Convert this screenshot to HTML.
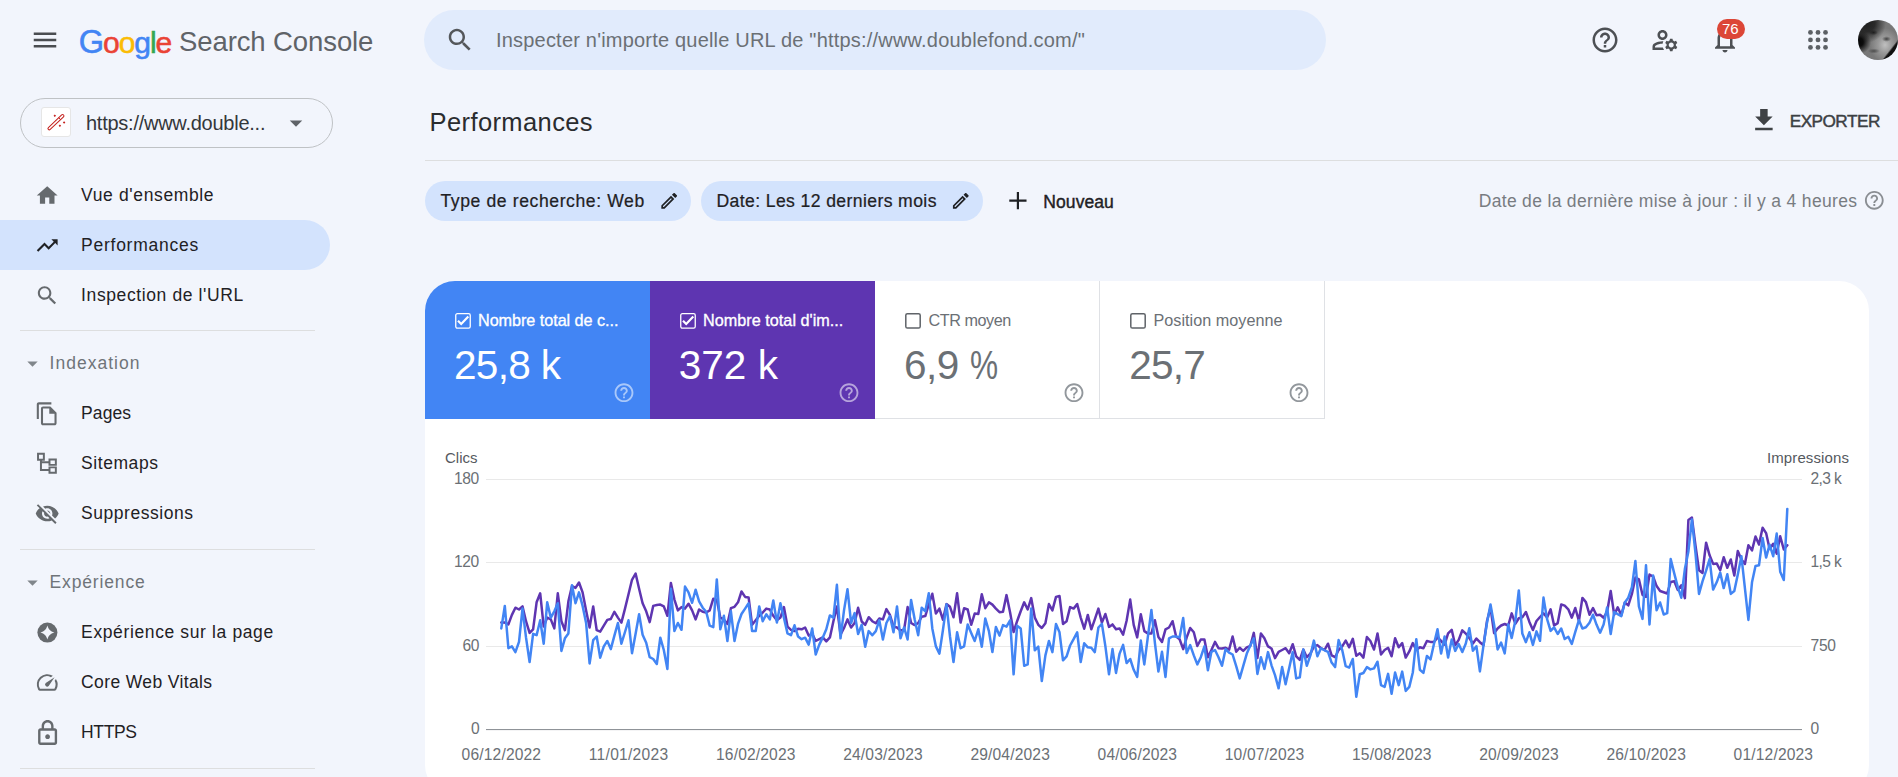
<!DOCTYPE html>
<html lang="fr"><head><meta charset="utf-8"><title>Performances - Google Search Console</title>
<style>
html,body{margin:0;padding:0;background:#f2f5fc}
body{width:1898px;height:777px;overflow:hidden;position:relative;font-family:"Liberation Sans", sans-serif;}
header,nav,main{display:block;margin:0;padding:0}
.t{position:absolute;white-space:nowrap;margin:0;padding:0}
.i{position:absolute;display:block;overflow:visible}
.b{position:absolute;box-sizing:border-box}
</style></head><body>
<header>
<div class="b" style="left:424px;top:10px;width:901.5px;height:60px;border-radius:30px;background:#e1ebfc"></div>
<div class="b" style="left:1858px;top:20px;width:40px;height:40px;border-radius:20px;background:radial-gradient(ellipse 4.5px 2.6px at 15.5px 12.5px,rgba(25,25,25,.85) 0,rgba(25,25,25,0) 100%),radial-gradient(ellipse 4.5px 2.8px at 28.5px 19px,rgba(30,30,30,.75) 0,rgba(30,30,30,0) 100%),radial-gradient(ellipse 6px 2.5px at 16px 31px,rgba(40,40,40,.6) 0,rgba(40,40,40,0) 100%),linear-gradient(128deg,rgba(0,0,0,0) 0,rgba(0,0,0,0) 77%,#111 80%,#0a0a0a 100%),radial-gradient(circle 12px at 1px 22px,#060606 0,#0c0c0c 35%,rgba(12,12,12,0) 100%),radial-gradient(circle 20px at 8px 3px,#1e1e1e 0,#2a2a2a 45%,rgba(42,42,42,0) 100%),radial-gradient(ellipse 15px 17px at 27px 25px,#c0c0c0 0,#9a9a9a 45%,#787878 100%)"></div>
<svg class="i" style="left:30px;top:25px;" width="31" height="31" viewBox="0 0 31 31"><g transform="translate(0.00 0.00) scale(1.2500)"><path fill="#4a4d51" d="M3 18h18v-2H3v2zm0-5h18v-2H3v2zm0-7v2h18V6H3z"/></g></svg>
<svg class="i" style="left:445px;top:25px;" width="31" height="31" viewBox="0 0 31 31"><g transform="translate(0.00 0.00) scale(1.2500)"><path fill="#54575b" d="M15.5 14h-.79l-.28-.27C15.41 12.59 16 11.11 16 9.5 16 5.91 13.09 3 9.5 3S3 5.91 3 9.5 5.91 16 9.5 16c1.61 0 3.09-.59 4.23-1.57l.27.28v.79l5 4.99L20.49 19l-4.99-5zm-6 0C7.01 14 5 11.99 5 9.5S7.01 5 9.5 5 14 7.01 14 9.5 11.99 14 9.5 14z"/></g></svg>
<svg class="i" style="left:1590px;top:25px;" width="31" height="31" viewBox="0 0 31 31"><g transform="translate(0.00 0.00) scale(1.2500)"><path fill="#4d5054" d="M11 18h2v-2h-2v2zm1-16C6.48 2 2 6.48 2 12s4.48 10 10 10 10-4.48 10-10S17.52 2 12 2zm0 18c-4.41 0-8-3.59-8-8s3.59-8 8-8 8 3.59 8 8-3.59 8-8 8zm0-14c-2.21 0-4 1.79-4 4h2c0-1.1.9-2 2-2s2 .9 2 2c0 2-3 1.75-3 5h2c0-2.25 3-2.5 3-5 0-2.21-1.79-4-4-4z"/></g></svg>
<svg class="i" style="left:1650px;top:25px;" width="31" height="31" viewBox="0 0 31 31"><g transform="translate(0.00 0.00) scale(1.2500)"><path fill="#4d5054" d="M4 18v-.65c0-.34.16-.66.41-.81C6.1 15.53 8.03 15 10 15c.03 0 .05 0 .08.01.1-.7.3-1.37.59-1.98-.22-.02-.44-.03-.67-.03-2.42 0-4.68.67-6.61 1.82-.88.52-1.39 1.5-1.39 2.53V20h9.26c-.42-.6-.75-1.28-.97-2H4zM10 12c2.21 0 4-1.79 4-4s-1.79-4-4-4-4 1.79-4 4 1.79 4 4 4zm0-6c1.1 0 2 .9 2 2s-.9 2-2 2-2-.9-2-2 .9-2 2-2zM20.75 16c0-.22-.03-.42-.06-.63l1.14-1.01-1-1.73-1.45.49c-.32-.27-.68-.48-1.08-.63L18 11h-2l-.3 1.49c-.4.15-.76.36-1.08.63l-1.45-.49-1 1.73 1.14 1.01c-.03.21-.06.41-.06.63s.03.42.06.63l-1.14 1.01 1 1.73 1.45-.49c.32.27.68.48 1.08.63L16 21h2l.3-1.49c.4-.15.76-.36 1.08-.63l1.45.49 1-1.73-1.14-1.01c.03-.21.06-.41.06-.63zM17 18c-1.1 0-2-.9-2-2s.9-2 2-2 2 .9 2 2-.9 2-2 2z"/></g></svg>
<svg class="i" style="left:1710px;top:25px;" width="31" height="31" viewBox="0 0 31 31"><g transform="translate(0.00 0.00) scale(1.2500)"><path fill="#4d5054" d="M12 22c1.1 0 2-.9 2-2h-4c0 1.1.9 2 2 2zm6-6v-5c0-3.07-1.63-5.64-4.5-6.32V4c0-.83-.67-1.5-1.5-1.5s-1.5.67-1.5 1.5v.68C7.64 5.36 6 7.92 6 11v5l-2 2v1h16v-1l-2-2zm-2 1H8v-6c0-2.48 1.51-4.5 4-4.5s4 2.02 4 4.5v6z"/></g></svg>
<svg class="i" style="left:1805px;top:27px" width="26" height="26" viewBox="0 0 26 26"><circle cx="5.46" cy="5.39" r="2.4" fill="#5c6065"/><circle cx="5.46" cy="12.92" r="2.4" fill="#5c6065"/><circle cx="5.46" cy="20.45" r="2.4" fill="#5c6065"/><circle cx="12.99" cy="5.39" r="2.4" fill="#5c6065"/><circle cx="12.99" cy="12.92" r="2.4" fill="#5c6065"/><circle cx="12.99" cy="20.45" r="2.4" fill="#5c6065"/><circle cx="20.52" cy="5.39" r="2.4" fill="#5c6065"/><circle cx="20.52" cy="12.92" r="2.4" fill="#5c6065"/><circle cx="20.52" cy="20.45" r="2.4" fill="#5c6065"/></svg>
<div class="b" style="left:1716.5px;top:19px;width:28px;height:19.6px;border-radius:10px;background:#dc4637"></div>
<div id="t0" class="t" style="left:78.8px;top:22.50px;font-size:30px;line-height:39.0px;color:#4285f4;letter-spacing:-1.051px;-webkit-text-stroke:0.55px;"><span style="color:#4285f4;font-size:32.5px">G</span><span style="color:#ea4335">o</span><span style="color:#fbbc05">o</span><span style="color:#4285f4">g</span><span style="color:#34a853">l</span><span style="color:#ea4335">e</span></div>
<div id="t1" class="t" style="left:179px;top:24.40px;font-size:27.5px;line-height:35.75px;color:#5f6368;letter-spacing:-0.098px;">Search Console</div>
<div id="t2" class="t" style="left:496px;top:26.57px;font-size:20px;line-height:26.0px;color:#6b7075;letter-spacing:0.199px;">Inspecter n'importe quelle URL de "https://www.doublefond.com/"</div>
<div id="t3" class="t" style="left:1722px;top:19.35px;font-size:15px;line-height:19.5px;color:#ffffff;letter-spacing:-0.044px;">76</div>
</header>
<nav>
<div class="b" style="left:20px;top:98px;width:312.5px;height:49.5px;border-radius:25px;border:1px solid #bfc2c5"></div>
<div class="b" style="left:41px;top:107px;width:30px;height:30px;border-radius:3px;background:#fff;border:1px solid #e6e6e6"></div>
<div class="b" style="left:0;top:220.2px;width:330px;height:49.6px;border-radius:0 25px 25px 0;background:#d3e3fd"></div>
<div class="b" style="left:20px;top:329.8px;width:295px;height:1.3px;background:#dddedf"></div>
<div class="b" style="left:20px;top:548.8px;width:295px;height:1.3px;background:#dddedf"></div>
<div class="b" style="left:20px;top:767.6px;width:295px;height:1.3px;background:#dddedf"></div>
<svg class="i" style="left:281px;top:108px;" width="31" height="31" viewBox="0 0 31 31"><g transform="translate(0.00 0.00) scale(1.2500)"><path fill="#5f6368" d="M7 10l5 5 5-5z"/></g></svg>
<svg class="i" style="left:34px;top:183px;" width="26" height="26" viewBox="0 0 26 26"><g transform="translate(0.70 0.00) scale(1.0417)"><path fill="#666a6e" d="M10 20v-6h4v6h5v-8h3L12 3 2 12h3v8z"/></g></svg>
<svg class="i" style="left:34px;top:233px;" width="26" height="26" viewBox="0 0 26 26"><g transform="translate(0.70 0.00) scale(1.0417)"><path fill="#1f2124" d="M16 6l2.29 2.29-4.88 4.88-4-4L2 16.59 3.41 18l6-6 4 4 6.3-6.29L22 12V6z"/></g></svg>
<svg class="i" style="left:34px;top:283px;" width="26" height="26" viewBox="0 0 26 26"><g transform="translate(0.70 0.00) scale(1.0417)"><path fill="#666a6e" d="M15.5 14h-.79l-.28-.27C15.41 12.59 16 11.11 16 9.5 16 5.91 13.09 3 9.5 3S3 5.91 3 9.5 5.91 16 9.5 16c1.61 0 3.09-.59 4.23-1.57l.27.28v.79l5 4.99L20.49 19l-4.99-5zm-6 0C7.01 14 5 11.99 5 9.5S7.01 5 9.5 5 14 7.01 14 9.5 11.99 14 9.5 14z"/></g></svg>
<svg class="i" style="left:20px;top:351px;" width="26" height="26" viewBox="0 0 26 26"><g transform="translate(0.00 0.00) scale(1.0417)"><path fill="#80868b" d="M7 10l5 5 5-5z"/></g></svg>
<svg class="i" style="left:34px;top:401px;" width="26" height="26" viewBox="0 0 26 26"><g transform="translate(0.70 0.30) scale(1.0417)"><path fill="#666a6e" d="M16 1H4c-1.1 0-2 .9-2 2v14h2V3h12V1zm-1 4H8c-1.1 0-1.99.9-1.99 2L6 21c0 1.1.89 2 1.99 2H19c1.1 0 2-.9 2-2V11l-6-6zM8 21V7h6v5h5v9H8z"/></g></svg>
<svg class="i" style="left:34px;top:450px;" width="26" height="26" viewBox="0 0 26 26"><g transform="translate(0.70 0.50) scale(1.0417)"><path fill="none" stroke="#666a6e" stroke-width="1.9" d="M3.2 3.2h5.6v5.6H3.2zM14.2 8.7h6.1v5.1h-6.1zM14.2 16.2h6.1v5.1h-6.1zM6 8.8v10h8.2M6 11.2h8.2"/></g></svg>
<svg class="i" style="left:34px;top:501px;" width="26" height="26" viewBox="0 0 26 26"><g transform="translate(0.70 0.00) scale(1.0417)"><path fill="#666a6e" d="M12 7c2.76 0 5 2.24 5 5 0 .65-.13 1.26-.36 1.83l2.92 2.92c1.51-1.26 2.7-2.89 3.43-4.75-1.73-4.39-6-7.5-11-7.5-1.4 0-2.74.25-3.98.7l2.16 2.16C10.74 7.13 11.35 7 12 7zM2 4.27l2.28 2.28.46.46C3.08 8.3 1.78 10.02 1 12c1.73 4.39 6 7.5 11 7.5 1.55 0 3.03-.3 4.38-.84l.42.42L19.73 22 21 20.73 3.27 3 2 4.27zM7.53 9.8l1.55 1.55c-.05.21-.08.43-.08.65 0 1.66 1.34 3 3 3 .22 0 .44-.03.65-.08l1.55 1.55c-.67.33-1.41.53-2.2.53-2.76 0-5-2.24-5-5 0-.79.2-1.53.53-2.2zm4.31-.78l3.15 3.15.02-.16c0-1.66-1.34-3-3-3l-.17.01z"/></g></svg>
<svg class="i" style="left:20px;top:570px;" width="26" height="26" viewBox="0 0 26 26"><g transform="translate(0.00 0.00) scale(1.0417)"><path fill="#80868b" d="M7 10l5 5 5-5z"/></g></svg>
<svg class="i" style="left:34px;top:620px;" width="26" height="26" viewBox="0 0 26 26"><g transform="translate(0.90 0.10) scale(1.0417)"><circle cx="12" cy="12" r="9.6" fill="#666a6e"/><path fill="#f2f5fc" d="M12 5.3C13.3 9.3 14.7 10.7 18.7 12 14.7 13.3 13.3 14.7 12 18.7 10.7 14.7 9.3 13.3 5.3 12 9.3 10.7 10.7 9.3 12 5.3z"/></g></svg>
<svg class="i" style="left:34px;top:670px;" width="26" height="26" viewBox="0 0 26 26"><g transform="translate(0.70 0.00) scale(1.0417)"><path fill="#666a6e" d="M20.38 8.57l-1.23 1.85a8 8 0 0 1-.22 7.58H5.07A8 8 0 0 1 15.58 6.85l1.85-1.23A10 10 0 0 0 3.35 19a2 2 0 0 0 1.72 1h13.85a2 2 0 0 0 1.74-1 10 10 0 0 0-.27-10.44zm-9.79 6.84a2 2 0 0 0 2.83 0l5.66-8.49-8.49 5.66a2 2 0 0 0 0 2.83z"/></g></svg>
<svg class="i" style="left:33px;top:718px;" width="30" height="30" viewBox="0 0 30 30"><g transform="translate(0.35 0.85) scale(1.1875)"><path fill="#666a6e" d="M18 8h-1V6c0-2.76-2.24-5-5-5S7 3.24 7 6v2H6c-1.1 0-2 .9-2 2v10c0 1.1.9 2 2 2h12c1.1 0 2-.9 2-2V10c0-1.1-.9-2-2-2zM9 6c0-1.66 1.34-3 3-3s3 1.34 3 3v2H9V6zm9 14H6V10h12v10zm-6-3c1.1 0 2-.9 2-2s-.9-2-2-2-2 .9-2 2 .9 2 2 2z"/></g></svg>
<svg class="i" style="left:41px;top:107px" width="30" height="30" viewBox="0 0 30 30"><path d="M8.3 21.5L21.6 8.9" stroke="#c5221f" stroke-width="3.7" stroke-linecap="round" fill="none"/><path d="M8.3 21.5L21.6 8.9" stroke="#fff" stroke-width="1.6" stroke-linecap="round" fill="none"/><path d="M17.6 10.6l2.3 2.4" stroke="#c5221f" stroke-width="1" fill="none"/><path fill="#c5221f" d="M12.55 8.7L13.8 7.449999999999999L15.05 8.7L13.8 9.95zM21.85 15.6L23.1 14.35L24.35 15.6L23.1 16.85zM17.65 18.7L18.9 17.45L20.15 18.7L18.9 19.95z"/></svg>
<div id="t4" class="t" style="left:86.0px;top:110.07px;font-size:20px;line-height:26.0px;color:#34373b;letter-spacing:-0.255px;">https://www.double...</div>
<div id="t5" class="t" style="left:81.1px;top:183.96px;font-size:17.5px;line-height:22.75px;color:#1f2124;letter-spacing:0.628px;">Vue d'ensemble</div>
<div id="t6" class="t" style="left:81.1px;top:233.96px;font-size:17.5px;line-height:22.75px;color:#1f2124;letter-spacing:0.739px;">Performances</div>
<div id="t7" class="t" style="left:81.1px;top:283.96px;font-size:17.5px;line-height:22.75px;color:#1f2124;letter-spacing:0.605px;">Inspection de l'URL</div>
<div id="t8" class="t" style="left:81.1px;top:401.96px;font-size:17.5px;line-height:22.75px;color:#1f2124;letter-spacing:0.075px;">Pages</div>
<div id="t9" class="t" style="left:81.1px;top:451.96px;font-size:17.5px;line-height:22.75px;color:#1f2124;letter-spacing:0.556px;">Sitemaps</div>
<div id="t10" class="t" style="left:81.1px;top:501.96px;font-size:17.5px;line-height:22.75px;color:#1f2124;letter-spacing:0.538px;">Suppressions</div>
<div id="t11" class="t" style="left:81.1px;top:620.96px;font-size:17.5px;line-height:22.75px;color:#1f2124;letter-spacing:0.623px;">Expérience sur la page</div>
<div id="t12" class="t" style="left:81.1px;top:670.96px;font-size:17.5px;line-height:22.75px;color:#1f2124;letter-spacing:0.373px;">Core Web Vitals</div>
<div id="t13" class="t" style="left:81.1px;top:720.96px;font-size:17.5px;line-height:22.75px;color:#1f2124;letter-spacing:-0.395px;">HTTPS</div>
<div id="t14" class="t" style="left:49.6px;top:351.96px;font-size:17.5px;line-height:22.75px;color:#6f7479;letter-spacing:1.003px;">Indexation</div>
<div id="t15" class="t" style="left:49.6px;top:570.96px;font-size:17.5px;line-height:22.75px;color:#6f7479;letter-spacing:0.844px;">Expérience</div>
</nav>
<main>
<div class="b" style="left:425px;top:159.5px;width:1473px;height:1.3px;background:#dddedf"></div>
<div class="b" style="left:425px;top:181px;width:265.5px;height:40px;border-radius:20px;background:#d3e3fd"></div>
<div class="b" style="left:701px;top:181px;width:281.5px;height:40px;border-radius:20px;background:#d3e3fd"></div>
<div class="b" style="left:425px;top:281px;width:1444px;height:514px;border-radius:30px;background:#fff"></div>
<div class="b" style="left:425px;top:281px;width:225px;height:137.8px;border-radius:30px 0 0 0;background:#4285f4"></div>
<div class="b" style="left:650px;top:281px;width:225px;height:137.8px;background:#5e35b1"></div>
<div class="b" style="left:875px;top:281px;width:224.5px;height:137.8px;border-right:1.2px solid #dfe1e5;border-bottom:1.2px solid #dfe1e5"></div>
<div class="b" style="left:1099.5px;top:281px;width:225px;height:137.8px;border-right:1.2px solid #dfe1e5;border-bottom:1.2px solid #dfe1e5"></div>
<svg class="i" style="left:0;top:0" width="1898" height="777" viewBox="0 0 1898 777"><rect x="486" y="479" width="1316" height="1" fill="#e9e9e9"/><rect x="486" y="562" width="1316" height="1" fill="#e9e9e9"/><rect x="486" y="646" width="1316" height="1" fill="#e9e9e9"/><rect x="486" y="729" width="1316" height="1.1" fill="#8f9398"/><polyline points="501.3,622.6 504.8,622.6 508.4,624.4 511.9,614.9 515.4,607.7 519.0,609.5 522.5,606.4 526.0,621.2 529.6,632.9 533.1,629.3 536.6,602.3 540.2,593.3 543.7,626.6 547.2,617.6 550.8,619.4 554.3,628.4 557.8,593.3 561.4,621.2 564.9,630.2 568.4,601.4 572.0,586.1 575.5,587.9 579.0,582.5 582.6,592.4 586.1,610.4 589.6,627.5 593.2,606.4 596.7,630.2 600.2,631.6 603.8,625.7 607.3,619.9 610.8,619.0 614.4,611.8 617.9,617.6 621.4,622.6 625.0,608.6 628.5,594.2 632.0,579.8 635.6,573.5 639.1,588.8 642.6,603.2 646.2,611.3 649.7,622.1 653.2,605.9 656.8,605.0 660.3,604.6 663.8,606.4 667.4,615.8 670.9,583.0 674.4,599.6 677.9,610.4 681.5,607.1 685.0,608.6 688.5,603.7 692.1,610.4 695.6,619.4 699.1,609.5 702.7,611.8 706.2,612.5 709.7,610.4 713.3,598.7 716.8,599.6 720.3,617.6 723.9,619.4 727.4,623.9 730.9,608.2 734.5,606.8 738.0,602.3 741.5,591.5 745.1,596.9 748.6,597.4 752.1,624.8 755.7,620.3 759.2,615.8 762.7,612.5 766.3,608.6 769.8,609.5 773.3,615.8 776.9,620.3 780.4,617.6 783.9,607.1 787.5,626.6 791.0,629.8 794.5,631.1 798.1,628.7 801.6,629.3 805.1,627.5 808.7,635.6 812.2,633.8 815.7,641.0 819.3,639.2 822.8,637.4 826.3,641.3 829.9,637.4 833.4,621.2 836.9,606.4 840.5,634.7 844.0,628.0 847.5,619.4 851.1,627.5 854.6,623.0 858.1,607.7 861.7,621.5 865.2,624.8 868.7,617.2 872.3,621.2 875.8,623.3 879.3,618.5 882.9,619.4 886.4,609.1 889.9,614.9 893.5,626.6 897.0,627.5 900.5,630.5 904.1,629.8 907.6,607.1 911.1,623.0 914.7,625.1 918.2,623.0 921.7,616.7 925.3,616.1 928.8,604.1 932.3,593.8 935.9,613.6 939.4,608.6 942.9,619.7 946.5,604.1 950.0,606.8 953.5,617.2 957.1,593.3 960.6,622.6 964.1,608.2 967.7,609.5 971.2,624.8 974.7,613.6 978.3,614.0 981.8,594.2 985.3,608.2 988.9,602.3 992.4,604.6 995.9,608.6 999.5,612.2 1003.0,611.8 1006.5,595.1 1010.1,612.5 1013.6,632.0 1017.1,621.2 1020.7,611.3 1024.2,602.3 1027.7,609.5 1031.2,598.1 1034.8,617.6 1038.3,624.8 1041.8,628.0 1045.4,623.3 1048.9,604.1 1052.4,610.4 1056.0,596.9 1059.5,596.0 1063.0,623.9 1066.6,621.2 1070.1,607.1 1073.6,608.6 1077.2,604.1 1080.7,617.6 1084.2,628.7 1087.8,614.9 1091.3,629.3 1094.8,619.4 1098.4,608.6 1101.9,622.6 1105.4,614.0 1109.0,626.9 1112.5,624.4 1116.0,629.3 1119.6,628.4 1123.1,634.7 1126.6,620.8 1130.2,599.6 1133.7,624.8 1137.2,637.4 1140.8,614.3 1144.3,631.1 1147.8,633.4 1151.4,633.4 1154.9,620.3 1158.4,637.0 1162.0,641.9 1165.5,629.3 1169.0,627.5 1172.6,621.2 1176.1,636.5 1179.6,639.2 1183.2,649.1 1186.7,637.4 1190.2,628.0 1193.8,632.3 1197.3,646.0 1200.8,639.5 1204.4,639.5 1207.9,657.2 1211.4,650.0 1215.0,641.9 1218.5,648.2 1222.0,648.5 1225.6,647.8 1229.1,649.6 1232.6,636.5 1236.2,651.8 1239.7,647.8 1243.2,650.9 1246.8,647.3 1250.3,646.0 1253.8,632.9 1257.4,658.1 1260.9,633.4 1264.4,638.3 1268.0,646.4 1271.5,648.5 1275.0,658.1 1278.6,651.8 1282.1,650.0 1285.6,648.2 1289.2,653.2 1292.7,644.2 1296.2,656.3 1299.8,659.9 1303.3,649.6 1306.8,657.2 1310.4,653.6 1313.9,646.4 1317.4,645.1 1321.0,648.2 1324.5,650.0 1328.0,643.7 1331.6,655.4 1335.1,657.2 1338.6,650.0 1342.2,646.4 1345.7,640.6 1349.2,647.3 1352.8,638.8 1356.3,655.8 1359.8,653.2 1363.4,657.6 1366.9,637.0 1370.4,641.0 1374.0,649.6 1377.5,633.4 1381.0,654.5 1384.6,650.0 1388.1,647.8 1391.6,656.3 1395.1,638.3 1398.7,647.3 1402.2,643.1 1405.7,657.6 1409.3,651.4 1412.8,643.1 1416.3,650.0 1419.9,647.3 1423.4,648.2 1426.9,641.0 1430.5,641.9 1434.0,641.9 1437.5,637.4 1441.1,641.0 1444.6,644.6 1448.1,633.4 1451.7,629.8 1455.2,645.3 1458.7,639.9 1462.3,630.3 1465.8,633.6 1469.3,638.1 1472.9,643.5 1476.4,638.6 1479.9,642.2 1483.5,645.3 1487.0,621.0 1490.5,607.5 1494.1,633.2 1497.6,628.5 1501.1,625.5 1504.7,624.0 1508.2,625.5 1511.7,613.4 1515.3,623.7 1518.8,618.3 1522.3,617.4 1525.9,612.0 1529.4,621.9 1532.9,630.0 1536.5,621.0 1540.0,617.0 1543.5,613.4 1547.1,617.4 1550.6,609.3 1554.1,625.5 1557.7,623.1 1561.2,604.4 1564.7,605.7 1568.3,609.3 1571.8,617.7 1575.3,608.0 1578.9,621.0 1582.4,597.9 1585.9,602.1 1589.5,614.7 1593.0,608.0 1596.5,615.2 1600.1,614.7 1603.6,617.7 1607.1,612.0 1610.7,590.9 1614.2,614.7 1617.7,607.4 1621.3,615.1 1624.8,602.5 1628.3,605.4 1631.9,593.9 1635.4,577.5 1638.9,579.4 1642.5,594.8 1646.0,596.8 1649.5,574.6 1653.1,576.5 1656.6,586.1 1660.1,591.0 1663.7,592.3 1667.2,593.5 1670.7,581.9 1674.3,581.3 1677.8,590.0 1681.3,585.2 1684.9,598.1 1688.4,520.1 1691.9,517.6 1695.5,545.6 1699.0,570.3 1702.5,573.0 1706.1,542.7 1709.6,555.3 1713.1,563.9 1716.7,563.4 1720.2,570.3 1723.7,557.2 1727.3,567.8 1730.8,559.5 1734.3,575.5 1737.8,551.0 1741.4,559.5 1744.9,563.9 1748.4,545.2 1752.0,550.4 1755.5,536.5 1759.0,544.6 1762.6,527.8 1766.1,533.1 1769.6,549.1 1773.2,543.7 1776.7,553.7 1780.2,536.3 1783.8,549.5 1787.3,545.2" fill="none" stroke="#5e35b1" stroke-width="2.5" stroke-linejoin="round" stroke-linecap="round"/><polyline points="501.3,628.4 504.8,605.9 508.4,648.2 511.9,646.4 515.4,652.1 519.0,641.9 522.5,608.6 526.0,637.4 529.6,662.1 533.1,633.8 536.6,635.2 540.2,620.3 543.7,643.7 547.2,602.3 550.8,617.6 554.3,611.3 557.8,603.2 561.4,650.9 564.9,638.3 568.4,633.4 572.0,585.2 575.5,603.2 579.0,592.4 582.6,605.9 586.1,623.0 589.6,663.5 593.2,640.1 596.7,636.5 600.2,657.7 603.8,646.4 607.3,641.0 610.8,649.1 614.4,635.6 617.9,623.0 621.4,643.7 625.0,632.0 628.5,620.3 632.0,653.2 635.6,633.8 639.1,614.3 642.6,634.7 646.2,642.8 649.7,657.2 653.2,659.0 656.8,664.0 660.3,637.7 663.8,650.0 667.4,668.9 670.9,588.8 674.4,631.1 677.9,623.0 681.5,629.8 685.0,586.6 688.5,592.4 692.1,602.8 695.6,589.7 699.1,601.4 702.7,607.7 706.2,611.8 709.7,625.7 713.3,627.1 716.8,579.4 720.3,629.3 723.9,615.8 727.4,641.0 730.9,611.3 734.5,641.0 738.0,623.9 741.5,614.0 745.1,608.6 748.6,603.2 752.1,631.1 755.7,631.1 759.2,606.4 762.7,621.2 766.3,614.3 769.8,619.4 773.3,600.5 776.9,622.6 780.4,603.2 783.9,617.6 787.5,633.4 791.0,635.2 794.5,625.3 798.1,636.5 801.6,639.2 805.1,637.7 808.7,644.6 812.2,628.4 815.7,654.5 819.3,644.6 822.8,637.4 826.3,629.3 829.9,615.4 833.4,617.6 836.9,584.8 840.5,638.3 844.0,610.4 847.5,589.3 851.1,623.0 854.6,613.1 858.1,634.1 861.7,624.8 865.2,646.7 868.7,631.1 872.3,635.2 875.8,631.1 879.3,620.3 882.9,639.5 886.4,623.0 889.9,616.1 893.5,632.3 897.0,606.4 900.5,638.3 904.1,627.5 907.6,639.5 911.1,599.9 914.7,619.4 918.2,635.2 921.7,607.7 925.3,611.3 928.8,593.3 932.3,628.4 935.9,646.4 939.4,653.6 942.9,630.2 946.5,604.6 950.0,636.5 953.5,662.1 957.1,632.3 960.6,648.2 964.1,646.4 967.7,624.4 971.2,632.9 974.7,641.0 978.3,629.3 981.8,646.7 985.3,618.5 988.9,631.1 992.4,652.1 995.9,626.9 999.5,635.6 1003.0,625.1 1006.5,626.6 1010.1,620.3 1013.6,674.3 1017.1,625.7 1020.7,628.4 1024.2,665.8 1027.7,664.4 1031.2,608.6 1034.8,650.3 1038.3,646.7 1041.8,681.1 1045.4,655.4 1048.9,641.0 1052.4,652.1 1056.0,623.9 1059.5,632.3 1063.0,660.3 1066.6,656.3 1070.1,645.5 1073.6,639.2 1077.2,632.3 1080.7,662.1 1084.2,643.3 1087.8,647.3 1091.3,647.8 1094.8,652.1 1098.4,627.5 1101.9,623.9 1105.4,646.4 1109.0,674.3 1112.5,649.1 1116.0,672.9 1119.6,653.6 1123.1,644.9 1126.6,663.1 1130.2,659.0 1133.7,669.8 1137.2,677.0 1140.8,640.6 1144.3,664.4 1147.8,637.4 1151.4,610.0 1154.9,642.8 1158.4,671.6 1162.0,651.8 1165.5,677.0 1169.0,638.3 1172.6,636.5 1176.1,636.5 1179.6,637.4 1183.2,618.1 1186.7,653.1 1190.2,645.1 1193.8,655.4 1197.3,664.4 1200.8,657.2 1204.4,646.4 1207.9,670.2 1211.4,651.8 1215.0,650.0 1218.5,657.2 1222.0,665.8 1225.6,649.1 1229.1,652.7 1232.6,654.5 1236.2,666.2 1239.7,678.4 1243.2,666.2 1246.8,653.6 1250.3,645.5 1253.8,638.3 1257.4,673.9 1260.9,657.2 1264.4,668.9 1268.0,652.1 1271.5,665.3 1275.0,675.2 1278.6,688.3 1282.1,667.1 1285.6,684.2 1289.2,668.0 1292.7,652.1 1296.2,678.4 1299.8,677.4 1303.3,649.6 1306.8,665.8 1310.4,655.4 1313.9,640.6 1317.4,656.3 1321.0,648.2 1324.5,650.3 1328.0,651.8 1331.6,662.6 1335.1,667.1 1338.6,640.1 1342.2,650.0 1345.7,666.2 1349.2,667.6 1352.8,659.0 1356.3,696.8 1359.8,674.3 1363.4,673.0 1366.9,667.1 1370.4,669.4 1374.0,668.4 1377.5,661.7 1381.0,685.1 1384.6,686.9 1388.1,673.9 1391.6,693.7 1395.1,672.5 1398.7,685.1 1402.2,671.6 1405.7,690.9 1409.3,686.9 1412.8,672.5 1416.3,639.2 1419.9,669.8 1423.4,672.9 1426.9,655.9 1430.5,659.4 1434.0,643.7 1437.5,629.3 1441.1,653.6 1444.6,636.5 1448.1,657.6 1451.7,639.5 1455.2,650.9 1458.7,644.0 1462.3,652.0 1465.8,643.5 1469.3,628.2 1472.9,650.7 1476.4,646.2 1479.9,671.4 1483.5,645.3 1487.0,622.8 1490.5,604.4 1494.1,624.6 1497.6,649.4 1501.1,642.6 1504.7,653.4 1508.2,624.6 1511.7,638.1 1515.3,621.0 1518.8,590.4 1522.3,633.6 1525.9,642.2 1529.4,632.3 1532.9,644.9 1536.5,631.4 1540.0,640.8 1543.5,597.6 1547.1,619.2 1550.6,630.9 1554.1,627.3 1557.7,634.0 1561.2,628.5 1564.7,639.0 1568.3,636.8 1571.8,644.0 1575.3,631.8 1578.9,620.1 1582.4,628.5 1585.9,627.3 1589.5,622.8 1593.0,614.7 1596.5,624.6 1600.1,632.7 1603.6,624.6 1607.1,607.5 1610.7,634.0 1614.2,612.0 1617.7,614.1 1621.3,616.1 1624.8,602.5 1628.3,597.7 1631.9,587.1 1635.4,561.0 1638.9,606.4 1642.5,618.9 1646.0,565.3 1649.5,624.4 1653.1,575.5 1656.6,610.3 1660.1,602.5 1663.7,614.5 1667.2,613.2 1670.7,559.1 1674.3,573.6 1677.8,587.1 1681.3,597.7 1684.9,568.8 1688.4,551.4 1691.9,519.5 1695.5,553.3 1699.0,593.9 1702.5,581.3 1706.1,570.7 1709.6,559.1 1713.1,589.6 1716.7,582.3 1720.2,572.6 1723.7,588.1 1727.3,574.2 1730.8,593.9 1734.3,591.0 1737.8,574.6 1741.4,556.2 1744.9,588.1 1748.4,619.9 1752.0,582.3 1755.5,565.9 1759.0,565.3 1762.6,537.9 1766.1,557.6 1769.6,544.6 1773.2,556.2 1776.7,533.6 1780.2,571.7 1783.8,580.0 1787.3,508.9" fill="none" stroke="#4285f4" stroke-width="2.5" stroke-linejoin="round" stroke-linecap="round"/></svg>
<svg class="i" style="left:1748px;top:105px;" width="31" height="31" viewBox="0 0 31 31"><g transform="translate(0.90 0.20) scale(1.2500)"><path fill="#3f4245" d="M19 9h-4V3H9v6H5l7 7 7-7zM5 18v2h14v-2H5z"/></g></svg>
<svg class="i" style="left:658px;top:190px;" width="22" height="22" viewBox="0 0 22 22"><g transform="translate(0.70 0.30) scale(0.8750)"><path fill="#1f2124" d="M14.06 9.02l.92.92L5.92 19H5v-.92l9.06-9.06M17.66 3c-.25 0-.51.1-.7.29l-1.83 1.83 3.75 3.75 1.83-1.83c.39-.39.39-1.02 0-1.41l-2.34-2.34c-.2-.2-.45-.29-.71-.29zm-3.6 3.19L3 17.25V21h3.75L17.81 9.94l-3.75-3.75z"/></g></svg>
<svg class="i" style="left:950px;top:190px;" width="22" height="22" viewBox="0 0 22 22"><g transform="translate(0.30 0.30) scale(0.8750)"><path fill="#1f2124" d="M14.06 9.02l.92.92L5.92 19H5v-.92l9.06-9.06M17.66 3c-.25 0-.51.1-.7.29l-1.83 1.83 3.75 3.75 1.83-1.83c.39-.39.39-1.02 0-1.41l-2.34-2.34c-.2-.2-.45-.29-.71-.29zm-3.6 3.19L3 17.25V21h3.75L17.81 9.94l-3.75-3.75z"/></g></svg>
<svg class="i" style="left:1002px;top:185px;" width="31" height="31" viewBox="0 0 31 31"><g transform="translate(0.90 0.70) scale(1.2500)"><path d="M12 5.1v13.8M5.1 12h13.8" stroke="#1f2124" stroke-width="1.75" fill="none"/></g></svg>
<svg class="i" style="left:1863px;top:189px;" width="24" height="24" viewBox="0 0 24 24"><g transform="translate(0.05 0.05) scale(0.9375)"><path fill="#8a8e93" d="M11 18h2v-2h-2v2zm1-16C6.48 2 2 6.48 2 12s4.48 10 10 10 10-4.48 10-10S17.52 2 12 2zm0 18c-4.41 0-8-3.59-8-8s3.59-8 8-8 8 3.59 8 8-3.59 8-8 8zm0-14c-2.21 0-4 1.79-4 4h2c0-1.1.9-2 2-2s2 .9 2 2c0 2-3 1.75-3 5h2c0-2.25 3-2.5 3-5 0-2.21-1.79-4-4-4z"/></g></svg>
<svg class="i" style="left:612px;top:381px;" width="24" height="24" viewBox="0 0 24 24"><g transform="translate(0.70 0.40) scale(0.9417)"><path fill="rgba(255,255,255,.55)" d="M11 18h2v-2h-2v2zm1-16C6.48 2 2 6.48 2 12s4.48 10 10 10 10-4.48 10-10S17.52 2 12 2zm0 18c-4.41 0-8-3.59-8-8s3.59-8 8-8 8 3.59 8 8-3.59 8-8 8zm0-14c-2.21 0-4 1.79-4 4h2c0-1.1.9-2 2-2s2 .9 2 2c0 2-3 1.75-3 5h2c0-2.25 3-2.5 3-5 0-2.21-1.79-4-4-4z"/></g></svg>
<svg class="i" style="left:837px;top:381px;" width="24" height="24" viewBox="0 0 24 24"><g transform="translate(0.70 0.40) scale(0.9417)"><path fill="rgba(255,255,255,.55)" d="M11 18h2v-2h-2v2zm1-16C6.48 2 2 6.48 2 12s4.48 10 10 10 10-4.48 10-10S17.52 2 12 2zm0 18c-4.41 0-8-3.59-8-8s3.59-8 8-8 8 3.59 8 8-3.59 8-8 8zm0-14c-2.21 0-4 1.79-4 4h2c0-1.1.9-2 2-2s2 .9 2 2c0 2-3 1.75-3 5h2c0-2.25 3-2.5 3-5 0-2.21-1.79-4-4-4z"/></g></svg>
<svg class="i" style="left:1062px;top:381px;" width="24" height="24" viewBox="0 0 24 24"><g transform="translate(0.70 0.40) scale(0.9417)"><path fill="#92979c" d="M11 18h2v-2h-2v2zm1-16C6.48 2 2 6.48 2 12s4.48 10 10 10 10-4.48 10-10S17.52 2 12 2zm0 18c-4.41 0-8-3.59-8-8s3.59-8 8-8 8 3.59 8 8-3.59 8-8 8zm0-14c-2.21 0-4 1.79-4 4h2c0-1.1.9-2 2-2s2 .9 2 2c0 2-3 1.75-3 5h2c0-2.25 3-2.5 3-5 0-2.21-1.79-4-4-4z"/></g></svg>
<svg class="i" style="left:1287px;top:381px;" width="24" height="24" viewBox="0 0 24 24"><g transform="translate(0.70 0.40) scale(0.9417)"><path fill="#92979c" d="M11 18h2v-2h-2v2zm1-16C6.48 2 2 6.48 2 12s4.48 10 10 10 10-4.48 10-10S17.52 2 12 2zm0 18c-4.41 0-8-3.59-8-8s3.59-8 8-8 8 3.59 8 8-3.59 8-8 8zm0-14c-2.21 0-4 1.79-4 4h2c0-1.1.9-2 2-2s2 .9 2 2c0 2-3 1.75-3 5h2c0-2.25 3-2.5 3-5 0-2.21-1.79-4-4-4z"/></g></svg>
<svg class="i" style="left:455px;top:313px" width="17" height="17" viewBox="0 0 17 17"><rect x="0.75" y="0.65" width="14.5" height="14.5" rx="1.6" fill="none" stroke="#fff" stroke-width="1.3"/><path d="M3 7.8l3.2 3.2 7.1-7.4" fill="none" stroke="#fff" stroke-width="2.2"/></svg>
<svg class="i" style="left:680px;top:313px" width="17" height="17" viewBox="0 0 17 17"><rect x="0.75" y="0.65" width="14.5" height="14.5" rx="1.6" fill="none" stroke="#fff" stroke-width="1.3"/><path d="M3 7.8l3.2 3.2 7.1-7.4" fill="none" stroke="#fff" stroke-width="2.2"/></svg>
<svg class="i" style="left:905px;top:313px" width="17" height="17" viewBox="0 0 17 17"><rect x="0.8" y="0.7" width="14.4" height="14.4" rx="1.6" fill="#fff" stroke="#5f6368" stroke-width="1.5"/></svg>
<svg class="i" style="left:1130px;top:313px" width="17" height="17" viewBox="0 0 17 17"><rect x="0.8" y="0.7" width="14.4" height="14.4" rx="1.6" fill="#fff" stroke="#5f6368" stroke-width="1.5"/></svg>
<div id="t16" class="t" style="left:429.6px;top:106.09px;font-size:25.5px;line-height:33.15px;color:#2a2c2f;letter-spacing:0.389px;">Performances</div>
<div id="t17" class="t" style="left:1789.7px;top:109.86px;font-size:17.2px;line-height:22.36px;color:#3c4043;letter-spacing:-0.519px;-webkit-text-stroke:0.45px #3c4043;">EXPORTER</div>
<div id="t18" class="t" style="left:440.5px;top:190.06px;font-size:17.6px;line-height:22.88px;color:#1f2124;letter-spacing:0.588px;-webkit-text-stroke:0.22px #1f2124;">Type de recherche: Web</div>
<div id="t19" class="t" style="left:716.5px;top:190.06px;font-size:17.6px;line-height:22.88px;color:#1f2124;letter-spacing:0.387px;-webkit-text-stroke:0.22px #1f2124;">Date: Les 12 derniers mois</div>
<div id="t20" class="t" style="left:1043.3px;top:190.86px;font-size:17.5px;line-height:22.75px;color:#1f2124;letter-spacing:0.077px;-webkit-text-stroke:0.4px #1f2124;">Nouveau</div>
<div id="t21" class="t" style="left:1478.7px;top:190.06px;font-size:17.5px;line-height:22.75px;color:#787c81;letter-spacing:0.322px;">Date de la dernière mise à jour : il y a 4 heures</div>
<div id="t22" class="t" style="left:478.0px;top:309.96px;font-size:16.2px;line-height:21.06px;color:#ffffff;letter-spacing:-0.043px;-webkit-text-stroke:0.33px #fff;">Nombre total de c...</div>
<div id="t23" class="t" style="left:703.0px;top:309.96px;font-size:16.2px;line-height:21.06px;color:#ffffff;letter-spacing:0.028px;-webkit-text-stroke:0.33px #fff;">Nombre total d'im...</div>
<div id="t24" class="t" style="left:928.5px;top:309.96px;font-size:16.2px;line-height:21.06px;color:#6b7075;letter-spacing:-0.451px;">CTR moyen</div>
<div id="t25" class="t" style="left:1153.5px;top:309.96px;font-size:16.2px;line-height:21.06px;color:#6b7075;letter-spacing:0.026px;">Position moyenne</div>
<div id="t26" class="t" style="left:454.0px;top:338.84px;font-size:40.5px;line-height:52.65px;color:#ffffff;letter-spacing:-0.688px;">25,8 k</div>
<div id="t27" class="t" style="left:678.8px;top:338.84px;font-size:40.5px;line-height:52.65px;color:#ffffff;letter-spacing:0.004px;">372 k</div>
<div id="t28" class="t" style="left:904.0px;top:338.84px;font-size:40.5px;line-height:52.65px;color:#6b7075;letter-spacing:-0.516px;">6,9 <span style="display:inline-block;transform:scaleX(.78);transform-origin:0 50%;margin-right:-8px">%</span></div>
<div id="t29" class="t" style="left:1129.2px;top:338.84px;font-size:40.5px;line-height:52.65px;color:#6b7075;letter-spacing:-0.757px;">25,7</div>
<div id="t30" class="t" style="left:445px;top:448.05px;font-size:15px;line-height:19.5px;color:#55595e;letter-spacing:0.000px;">Clics</div>
<div id="t31" class="t" style="left:1767px;top:448.05px;font-size:15px;line-height:19.5px;color:#55595e;letter-spacing:0.104px;">Impressions</div>
<div id="t32" class="t" style="left:454px;top:468.85px;font-size:15.6px;line-height:20.28px;color:#6b7075;letter-spacing:-0.444px;">180</div>
<div id="t33" class="t" style="left:454px;top:551.85px;font-size:15.6px;line-height:20.28px;color:#6b7075;letter-spacing:-0.444px;">120</div>
<div id="t34" class="t" style="left:462.6px;top:635.85px;font-size:15.6px;line-height:20.28px;color:#6b7075;letter-spacing:-0.630px;">60</div>
<div id="t35" class="t" style="left:470.9px;top:718.85px;font-size:15.6px;line-height:20.28px;color:#6b7075;letter-spacing:-0.887px;">0</div>
<div id="t36" class="t" style="left:1810.5px;top:468.85px;font-size:15.6px;line-height:20.28px;color:#6b7075;letter-spacing:-0.603px;">2,3 k</div>
<div id="t37" class="t" style="left:1810.5px;top:551.85px;font-size:15.6px;line-height:20.28px;color:#6b7075;letter-spacing:-0.603px;">1,5 k</div>
<div id="t38" class="t" style="left:1810.5px;top:635.85px;font-size:15.6px;line-height:20.28px;color:#6b7075;letter-spacing:-0.244px;">750</div>
<div id="t39" class="t" style="left:1810.5px;top:718.85px;font-size:15.6px;line-height:20.28px;color:#6b7075;letter-spacing:-0.388px;">0</div>
<div id="t40" class="t" style="left:461.6px;top:744.95px;font-size:15.6px;line-height:20.28px;color:#6b7075;letter-spacing:0.155px;">06/12/2022</div>
<div id="t41" class="t" style="left:588.8px;top:744.95px;font-size:15.6px;line-height:20.28px;color:#6b7075;letter-spacing:0.271px;">11/01/2023</div>
<div id="t42" class="t" style="left:716.0px;top:744.95px;font-size:15.6px;line-height:20.28px;color:#6b7075;letter-spacing:0.155px;">16/02/2023</div>
<div id="t43" class="t" style="left:843.2px;top:744.95px;font-size:15.6px;line-height:20.28px;color:#6b7075;letter-spacing:0.155px;">24/03/2023</div>
<div id="t44" class="t" style="left:970.4px;top:744.95px;font-size:15.6px;line-height:20.28px;color:#6b7075;letter-spacing:0.155px;">29/04/2023</div>
<div id="t45" class="t" style="left:1097.6px;top:744.95px;font-size:15.6px;line-height:20.28px;color:#6b7075;letter-spacing:0.155px;">04/06/2023</div>
<div id="t46" class="t" style="left:1224.8px;top:744.95px;font-size:15.6px;line-height:20.28px;color:#6b7075;letter-spacing:0.155px;">10/07/2023</div>
<div id="t47" class="t" style="left:1352.0px;top:744.95px;font-size:15.6px;line-height:20.28px;color:#6b7075;letter-spacing:0.155px;">15/08/2023</div>
<div id="t48" class="t" style="left:1479.2px;top:744.95px;font-size:15.6px;line-height:20.28px;color:#6b7075;letter-spacing:0.155px;">20/09/2023</div>
<div id="t49" class="t" style="left:1606.3999999999999px;top:744.95px;font-size:15.6px;line-height:20.28px;color:#6b7075;letter-spacing:0.155px;">26/10/2023</div>
<div id="t50" class="t" style="left:1733.6px;top:744.95px;font-size:15.6px;line-height:20.28px;color:#6b7075;letter-spacing:0.155px;">01/12/2023</div>
</main>
</body></html>
